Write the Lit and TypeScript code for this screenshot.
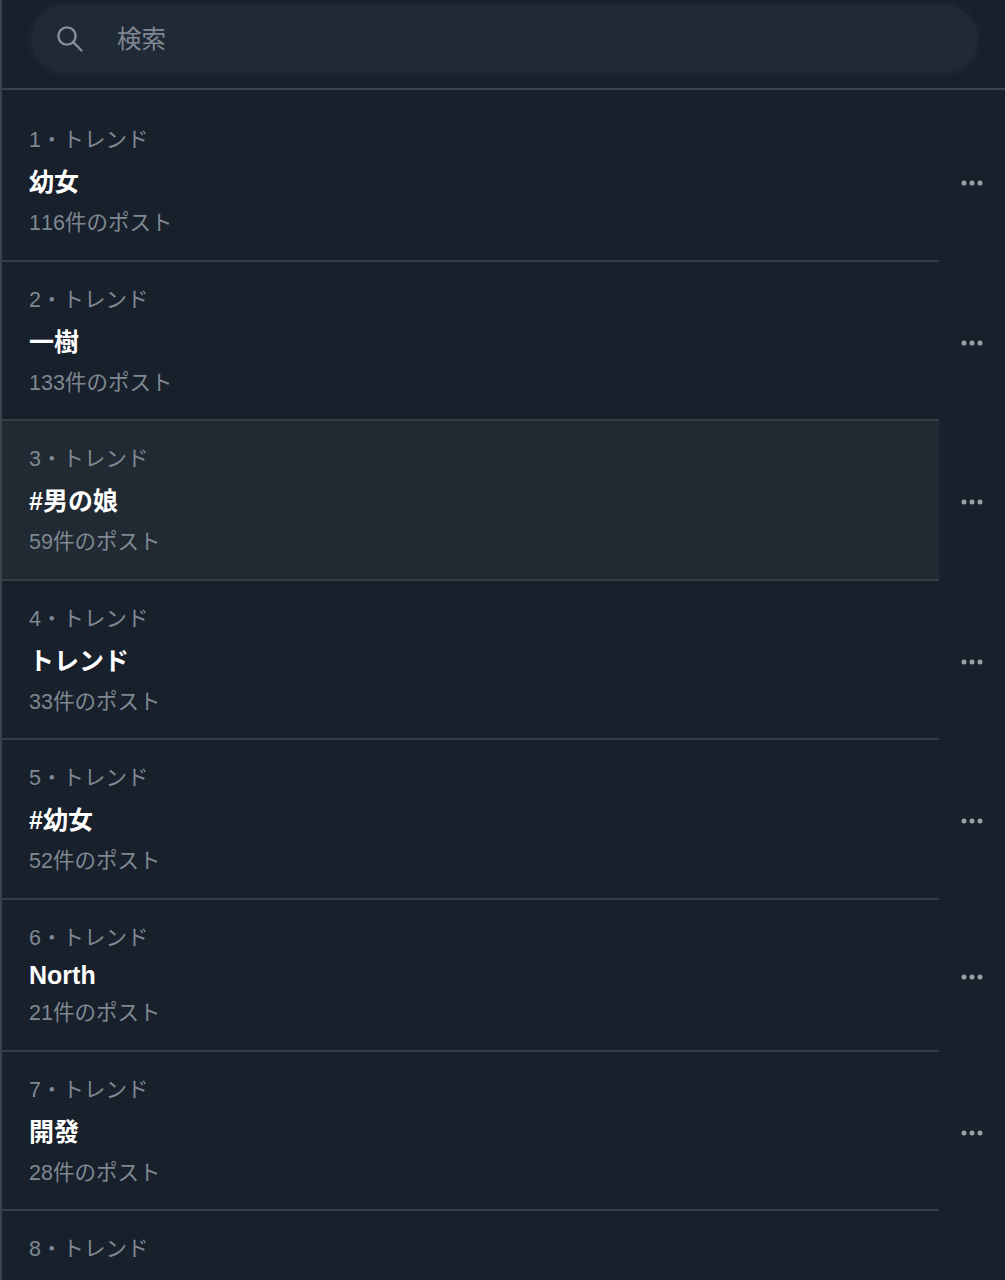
import { LitElement, html, css } from "lit";
import { customElement } from "lit/decorators.js";

interface Trend {
  rank: number;
  title?: string;
  count?: number;
  latin?: boolean;
  active?: boolean;
}

const TRENDS: Trend[] = [
  { rank: 1, title: "幼女", count: 116 },
  { rank: 2, title: "一樹", count: 133 },
  { rank: 3, title: "#男の娘", count: 59, active: true },
  { rank: 4, title: "トレンド", count: 33 },
  { rank: 5, title: "#幼女", count: 52 },
  { rank: 6, title: "North", count: 21, latin: true },
  { rank: 7, title: "開發", count: 28 },
  { rank: 8 },
];

@customElement("app-root")
export class AppRoot extends LitElement {
  static styles = css`
    :host {
      display: block;
      height: 1280px;
      overflow: hidden;
      box-sizing: border-box;
      border-left: 2px solid #3a424c;
      background: #18202b;
      font-family: "Liberation Sans", "Noto Sans CJK JP", sans-serif;
      color: #7f8892;
    }
    .header {
      height: 90px;
      box-sizing: border-box;
      padding: 5px 27px 0 29px;
      border-bottom: 2px solid #3a424c;
    }
    .search {
      height: 68px;
      box-sizing: border-box;
      border-radius: 34px;
      background: #1f2a36;
      box-shadow: 0 0 8px 1px #1e2834;
      display: flex;
      align-items: center;
      padding-left: 25px;
      gap: 33px;
    }
    .search svg {
      width: 28px;
      height: 28px;
      flex: none;
    }
    .search span {
      font-size: 24.5px;
      line-height: 30px;
      color: #7f8892;
      margin-top: 2px;
    }
    .list {
      padding-top: 12px;
    }
    .row {
      display: flex;
      align-items: stretch;
    }
    .main {
      width: 937px;
      flex: none;
      box-sizing: border-box;
      padding: 23px 0 21.5px 27px;
      border-bottom: 2px solid #343c46;
    }
    .main.active {
      background: #212932;
    }
    .main.cut {
      border-bottom: none;
    }
    .meta,
    .sub {
      font-size: 21.5px;
      line-height: 30px;
      white-space: nowrap;
      font-kerning: none;
    }
    .title {
      margin: 5px 0 3px;
      font-size: 25px;
      line-height: 45px;
      font-weight: 700;
      color: #ffffff;
      white-space: nowrap;
    }
    .title.latin {
      margin: 4px 0 5px;
      line-height: 36.5px;
    }
    .more {
      flex: 1;
      display: flex;
      align-items: center;
      padding: 3px 0 0 22px;
    }
    .more svg {
      width: 24px;
      height: 6px;
    }
  `;

  private renderRow(t: Trend) {
    return html`
      <div class="row">
        <div class="main ${t.active ? "active" : ""} ${t.title ? "" : "cut"}">
          <div class="meta">${t.rank}・トレンド</div>
          ${t.title
            ? html`<div class="title ${t.latin ? "latin" : ""}">${t.title}</div>
                <div class="sub">${t.count}件のポスト</div>`
            : ""}
        </div>
        ${t.title
          ? html`<div class="more">
              <svg viewBox="0 0 24 6" fill="#9ba1a9">
                <circle cx="3" cy="3" r="2.5"></circle>
                <circle cx="11" cy="3" r="2.5"></circle>
                <circle cx="19" cy="3" r="2.5"></circle>
              </svg>
            </div>`
          : ""}
      </div>
    `;
  }

  render() {
    return html`
      <div class="header">
        <div class="search">
          <svg viewBox="0 0 28 28" fill="none" stroke="#868e97" stroke-width="2.4" stroke-linecap="round">
            <circle cx="11" cy="11" r="8.6"></circle>
            <path d="M17.4 17.4L25.5 25.5"></path>
          </svg>
          <span>検索</span>
        </div>
      </div>
      <div class="list">${TRENDS.map((t) => this.renderRow(t))}</div>
    `;
  }
}
